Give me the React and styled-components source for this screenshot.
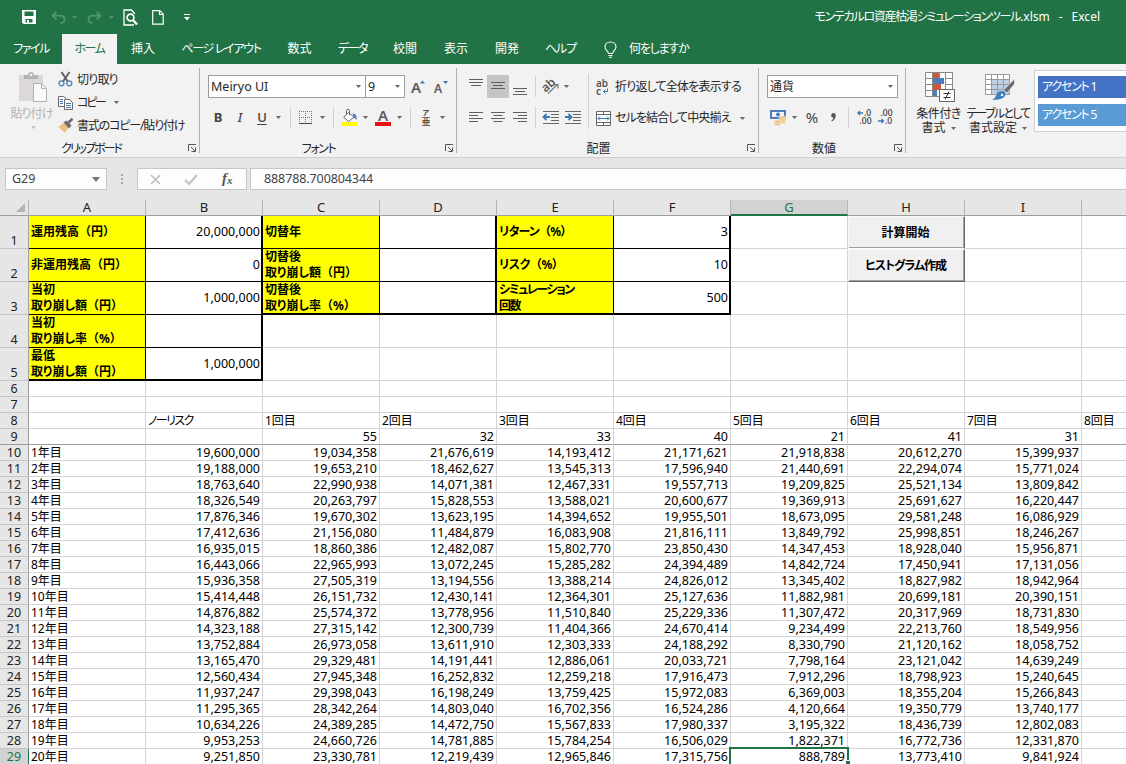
import React from 'react';
import styled, { createGlobalStyle } from 'styled-components';

const GlobalStyle = createGlobalStyle`
  body {
    margin: 0;
    overflow: hidden;
    font-family: "Noto Sans", "Noto Sans CJK JP", sans-serif;
    font-size: 12px;
    line-height: 16px;
    color: #262626;
    font-feature-settings: "palt";
  }
  svg {
    display: block;
    flex: none;
    overflow: visible;
  }
`;

const Window = styled.div`
  width: 1126px;
  height: 764px;
  overflow: hidden;
  display: flex;
  flex-direction: column;
  background-color: #e6e6e6;
`;

const Text = styled.span`
  white-space: pre;
  letter-spacing: ${({ track }) => track || 0}px;
  font-size: ${({ size }) => size || 12}px;
`;

/* title bar */

const TitleBar = styled.header`
  height: 34px;
  flex: none;
  display: flex;
  align-items: center;
  box-sizing: border-box;
  padding: 0 26px 0 11px;
  background-color: #217346;
  color: #ffffff;
`;

const QuickAccess = styled.div`
  display: flex;
  flex: 1;
  align-items: center;
`;

const Title = styled.div`
  display: flex;
  gap: 9px;
  padding-bottom: 1px;
`;

/* tabs */

const TabBar = styled.nav`
  height: 30px;
  flex: none;
  display: flex;
  background-color: #217346;
`;

const Tab = styled.div`
  width: ${({ w }) => w}px;
  display: flex;
  align-items: center;
  justify-content: center;
  box-sizing: border-box;
  background-color: ${({ active }) => (active ? '#f2f2f2' : 'transparent')};
  color: ${({ active }) => (active ? '#217346' : '#ffffff')};
`;

const TellMe = styled.div`
  display: flex;
  align-items: center;
  gap: 12px;
  padding-left: 16px;
  color: #ffffff;
`;

/* ribbon */

const Ribbon = styled.div`
  height: 94px;
  flex: none;
  box-sizing: border-box;
  display: flex;
  background-color: #f2f2f2;
  border-bottom: 1px solid #cfcfcf;
`;

const Group = styled.section`
  width: ${({ w }) => w}px;
  flex: none;
  box-sizing: border-box;
  display: flex;
  flex-direction: column;
  margin: 4px 0 4px;
  border-right: ${({ last }) => (last ? 'none' : '1px solid #b1b1b1')};
`;

const GroupBody = styled.div`
  height: 72px;
  flex: none;
  display: flex;
  padding-left: ${({ pad }) => pad || 0}px;
`;

const GroupFooter = styled.div`
  height: 9px;
  display: flex;
  align-items: center;
  padding: 4px 2px 0 0;
`;

const GroupName = styled.div`
  flex: 1;
  text-align: center;
  margin-left: ${({ shift }) => shift || 0}px;
`;

const Stack = styled.div`
  display: flex;
  flex-direction: column;
  gap: 5px;
  padding-top: 7px;
`;

const ToolRow = styled.div`
  display: flex;
  align-items: center;
  height: ${({ h }) => h}px;
`;

const Tool = styled.div`
  width: ${({ w }) => w}px;
  height: ${({ h }) => h || 23}px;
  flex: none;
  display: flex;
  align-items: center;
  justify-content: center;
  background-color: ${({ active }) => (active ? '#c5c5c5' : 'transparent')};
  color: #444444;
`;

const Letter = styled.span`
  font-size: ${({ size }) => size || 13}px;
  font-weight: ${({ weight }) => weight || 400};
  font-style: ${({ italic }) => (italic ? 'italic' : 'normal')};
  text-decoration: ${({ underline }) => (underline ? 'underline' : 'none')};
  text-underline-offset: 2px;
  color: #444444;
`;

const Divider = styled.div`
  width: 1px;
  height: ${({ h }) => h || 21}px;
  margin: ${({ gap }) => gap || '0'};
  flex: none;
  background-color: #d0d0d0;
`;

const Select = styled.div`
  width: ${({ w }) => w}px;
  height: 23px;
  flex: none;
  box-sizing: border-box;
  display: flex;
  align-items: center;
  justify-content: space-between;
  padding: 0 4px 0 2px;
  margin-left: ${({ joined }) => (joined ? -1 : 0)}px;
  border: 1px solid #9c9c9c;
  background-color: #ffffff;
`;

const Commands = styled.div`
  display: flex;
  flex-direction: column;
`;

const Command = styled.div`
  height: ${({ h }) => h || 23}px;
  display: flex;
  align-items: center;
`;

const CommandIcon = styled.div`
  width: 19px;
  flex: none;
`;

const BigButton = styled.div`
  width: ${({ w }) => w}px;
  display: flex;
  flex-direction: column;
  align-items: center;
  padding-top: 4px;
  line-height: 14px;
  color: ${({ disabled }) => (disabled ? '#b1b1b1' : '#262626')};
`;

const BigLabel = styled.div`
  display: flex;
  flex-direction: column;
  align-items: center;
  margin-top: 5px;
  padding-right: 3px;
  white-space: nowrap;
`;

const BigLabelRow = styled.div`
  display: flex;
  align-items: center;
  gap: 5px;
`;

const Gallery = styled.div`
  width: 100px;
  height: 62px;
  box-sizing: border-box;
  display: flex;
  flex-direction: column;
  gap: 6px;
  margin: 2px 0 0 5px;
  padding: 5px 0 0 3px;
  border: 1px solid #cfcfcf;
  background-color: #ffffff;
`;

const Swatch = styled.div`
  height: 22px;
  display: flex;
  align-items: center;
  padding-left: 4px;
  background-color: ${({ color }) => color};
  color: #ffffff;
`;

/* formula bar */

const FormulaBar = styled.div`
  height: 42px;
  flex: none;
  box-sizing: border-box;
  display: flex;
  padding: 10px 0 10px 5px;
  color: #444444;
`;

const Box = styled.div`
  width: ${({ w }) => w}px;
  height: 22px;
  box-sizing: border-box;
  display: flex;
  flex: none;
  align-items: center;
  justify-content: ${({ justify }) => justify || 'flex-start'};
  margin-right: ${({ gap }) => gap || 0}px;
  padding: 0 ${({ pad }) => pad || 0}px;
  border: 1px solid #c6c6c6;
  background-color: #fdfdfd;
`;

const Grip = styled.div`
  width: 30px;
  flex: none;
  display: flex;
  flex-direction: column;
  align-items: center;
  justify-content: center;
  gap: 2px;
`;

const Dot = styled.i`
  width: 2px;
  height: 2px;
  background-color: #a6a6a6;
`;

/* sheet */

const Sheet = styled.div`
  display: grid;
  grid-template-columns: 29px repeat(10, 117px);
  grid-template-rows: 16px repeat(5, 33px) repeat(24, 16px);
  background-color: #ffffff;
  color: #000000;
`;

const Corner = styled.div`
  box-sizing: border-box;
  display: flex;
  align-items: flex-end;
  justify-content: flex-end;
  padding: 0 3px 3px 0;
  background-color: #e6e6e6;
  border-right: 1px solid #b5b5b5;
  border-bottom: 1px solid #9e9e9e;
`;

const ColumnHeader = styled.div`
  box-sizing: border-box;
  font-size: 13px;
  line-height: 14px;
  text-align: center;
  background-color: ${({ active }) => (active ? '#d2d2d2' : '#e6e6e6')};
  color: ${({ active }) => (active ? '#217346' : '#222222')};
  border-right: 1px solid #b5b5b5;
  border-bottom: ${({ active }) => (active ? '2px solid #217346' : '1px solid #9e9e9e')};
`;

const RowHeader = styled.div`
  box-sizing: border-box;
  display: flex;
  align-items: flex-end;
  justify-content: center;
  font-size: 12.5px;
  line-height: 15px;
  background-color: ${({ active }) => (active ? '#d2d2d2' : '#e6e6e6')};
  color: ${({ active }) => (active ? '#217346' : '#222222')};
  border-right: 1px solid ${({ active }) => (active ? '#217346' : '#9e9e9e')};
  border-bottom: 1px solid ${({ frozen }) => (frozen ? '#9e9e9e' : '#c6c6c6')};
`;

const lines = {
  grid: '1px solid #d4d4d4',
  frozen: '1px solid #9e9e9e',
  thin: '1px solid #000000',
  thick: '2px solid #000000',
};

const Cell = styled.div`
  position: relative;
  box-sizing: border-box;
  display: flex;
  align-items: center;
  justify-content: ${({ number }) => (number ? 'flex-end' : 'flex-start')};
  padding: ${({ number, edge }) => (number ? `0 ${edge === 'thick' ? 1 : 2}px 0 0` : '0 0 0 2px')};
  font-size: ${({ number }) => (number ? 12.5 : 12)}px;
  font-weight: ${({ label }) => (label ? 700 : 400)};
  line-height: 16px;
  white-space: pre;
  letter-spacing: ${({ track }) => track || 0}px;
  background-color: ${({ label }) => (label ? '#ffff00' : '#ffffff')};
  border-right: ${({ edge }) => lines[edge || 'grid']};
  border-bottom: ${({ base }) => lines[base || 'grid']};
`;

const Paren = styled.span`
  margin-left: ${({ open }) => (open ? 5.5 : 0.5)}px;
  margin-right: ${({ open }) => (open ? 0.5 : 0)}px;
`;

const Selection = styled.div`
  position: absolute;
  top: -2px;
  left: -2px;
  right: -2px;
  bottom: -2px;
  z-index: 1;
  border: 2px solid #217346;
`;

const FillHandle = styled.i`
  position: absolute;
  right: -3px;
  bottom: 0;
  width: 4px;
  height: 3px;
  background-color: #217346;
  border-top: 1px solid #ffffff;
  border-left: 1px solid #ffffff;
`;

const SheetButton = styled.button`
  box-sizing: border-box;
  margin: 0;
  padding: 1px 2px 0 0;
  font: inherit;
  font-weight: 700;
  font-feature-settings: inherit;
  letter-spacing: ${({ track }) => track || 0}px;
  color: #000000;
  background-color: #f0f0f0;
  border: 1px solid #f8f8f8;
  border-right-color: #696969;
  border-bottom-color: ${({ stacked }) => (stacked ? '#ffffff' : '#696969')};
  box-shadow: inset -1px -1px 0 #a0a0a0;
`;

/* icons */

const Caret = ({ color = '#666666' }) => (
  <svg width="5" height="3" viewBox="0 0 5 3">
    <path d="M0 0h5L2.5 3z" fill={color} />
  </svg>
);

const SaveIcon = () => (
  <svg width="14" height="14" viewBox="0 0 14 14">
    <path d="M0 0h14v14H1.500L0 12.500z" fill="#fff" />
    <path d="M2.500 1.500h9V6h-9zM3.500 9h7v3.500h-7z" fill="#217346" />
    <path d="M5 10h2v2.500H5z" fill="#fff" />
  </svg>
);

const UndoIcon = ({ flip }) => (
  <svg width="15" height="13" viewBox="0 0 15 13">
    <path
      d="M5.500 1L1.500 4.700 5.500 8.500M2 4.700h7c3 0 4.500 1.800 4.500 3.800S12 12 9.500 12"
      transform={flip ? 'translate(15 0) scale(-1 1)' : undefined}
      fill="none"
      stroke="#4f9570"
      strokeWidth="1.8"
    />
  </svg>
);

const PreviewIcon = () => (
  <svg width="15" height="17" viewBox="0 0 15 17">
    <path d="M11.500 5V4.500L8.500 1H1v15h10" fill="none" stroke="#fff" strokeWidth="1.300" />
    <circle cx="7.500" cy="8.500" r="3.400" fill="none" stroke="#fff" strokeWidth="1.700" />
    <path d="M10 11l4 4.500" stroke="#fff" strokeWidth="2.300" />
  </svg>
);

const NewFileIcon = () => (
  <svg width="12" height="15" viewBox="0 0 12 15">
    <path d="M.7.700h7l3.500 3.500v10H.7zM7.500.700v3.800h3.700" fill="none" stroke="#fff" strokeWidth="1.200" />
  </svg>
);

const CustomizeIcon = () => (
  <svg width="6" height="7" viewBox="0 0 6 7">
    <path d="M0 0h6v1H0zM0 3h6L3 6.500z" fill="#fff" />
  </svg>
);

const BulbIcon = () => (
  <svg width="13" height="17" viewBox="0 0 13 17">
    <path
      d="M4.500 12.500c0-2-3.500-3.500-3.500-6.600C1 3 3.300 1 6.500 1S12 3 12 5.900c0 3.100-3.500 4.600-3.500 6.600zM4.500 14.500h4M5 16.300h3"
      fill="none"
      stroke="#fff"
      strokeWidth="1.100"
    />
  </svg>
);

const PasteIcon = () => (
  <svg width="28" height="30" viewBox="0 0 28 30">
    <path d="M0 3h24v26H0z" fill="#dbd7db" />
    <path d="M5 3h4c0-4 6-4 6 0h4v4H5z" fill="#b4b4b4" />
    <circle cx="12" cy="3" r="1.300" fill="#f2f2f2" />
    <path d="M14.500 11.500h8l5 5v13h-13z" fill="#fafafa" stroke="#b4b0b8" />
    <path d="M22.500 11.500v5h5" fill="none" stroke="#b4b0b8" />
  </svg>
);

const CutIcon = () => (
  <svg width="15" height="15" viewBox="0 0 15 15">
    <path d="M3.500 0L9.800 9.500M11.500 0L5 9.500" stroke="#5f5f5f" strokeWidth="1.900" />
    <circle cx="3.500" cy="11.300" r="2.500" fill="none" stroke="#4a7ebb" strokeWidth="1.300" />
    <circle cx="11.300" cy="11.300" r="2.500" fill="none" stroke="#4a7ebb" strokeWidth="1.300" />
  </svg>
);

const CopyIcon = () => (
  <svg width="15" height="14" viewBox="0 0 15 14">
    <path d="M.5.500h5l2.500 2v8H.5z" fill="#fff" stroke="#6a6a6a" />
    <path d="M2 3.500h3M2 5.500h3M2 7.500h3" stroke="#4a7ebb" />
    <path d="M6.500 3.500h5l3 3v7h-8z" fill="#fff" stroke="#6a6a6a" />
    <path d="M8 7.500h5M8 9.500h5M8 11.500h5" stroke="#4a7ebb" />
  </svg>
);

const PainterIcon = () => (
  <svg width="16" height="15" viewBox="0 0 16 15">
    <path d="M.5 8.500L6 5l4.500 4.500L7 14.500C4.500 13 2 11.500.5 8.500z" fill="#eebf7c" />
    <path d="M5.500 4.500L8.500 2.500l5 5-2.500 3z" fill="#6a6a6a" />
    <path d="M10.500 4.500L14.500.800" stroke="#6a6a6a" strokeWidth="2.600" />
  </svg>
);

const LauncherIcon = () => (
  <svg width="9" height="9" viewBox="0 0 9 9">
    <path d="M.5 7V.500H8" fill="none" stroke="#555" />
    <path d="M3 3l4 4M7.500 3.500v4h-4" fill="none" stroke="#555" />
  </svg>
);

const ResizeFont = ({ size, up }) => (
  <svg width="16" height="18" viewBox="0 0 16 18">
    <text x="0" y="15" fontFamily="Noto Sans" fontSize={size} fontWeight="600" fill="#5a5a5a">A</text>
    <path d={up ? 'M9 5.500h5L11.500 2.500z' : 'M9 3h5L11.500 6z'} fill="#3b78b8" />
  </svg>
);

const BorderIcon = () => (
  <svg width="13" height="13" viewBox="0 0 13 13">
    <path d="M0 .5h13M0 6.500h13M.5 0v13M6.500 0v13M12.500 0v13" stroke="#777" strokeDasharray="1 1" />
    <path d="M0 12.500h13" stroke="#444" />
  </svg>
);

const FillIcon = () => (
  <svg width="17" height="17" viewBox="0 0 17 17">
    <path d="M7.500 3.500L13 8.200l-5.500 4.300-4.800-4.300z" fill="#fff" stroke="#666" />
    <path d="M5.500 6V1.500c0-1.500 3-1.500 3 0V6" fill="none" stroke="#666" />
    <path d="M11.500 4.500c3 0 4.500 2 4 6.500l-2.500-2.500z" fill="#4a7ebb" />
    <path d="M0 13h16v4H0z" fill="#ffff00" />
  </svg>
);

const FontColorIcon = () => (
  <svg width="17" height="17" viewBox="0 0 17 17">
    <text x="3" y="12" fontFamily="Noto Sans" fontSize="15" fontWeight="600" fill="#5a5a5a">A</text>
    <path d="M0 13h16v4H0z" fill="#e81010" />
  </svg>
);

const PhoneticIcon = () => (
  <svg width="10" height="18" viewBox="0 0 10 18">
    <text x="1.500" y="7" fontFamily="Noto Sans CJK JP" fontSize="7" fontWeight="600" fill="#444">ア</text>
    <text x="0.500" y="16.500" fontFamily="Noto Sans CJK JP" fontSize="9" fontWeight="500" fill="#444">亜</text>
  </svg>
);

const alignPaths = {
  top: 'M0 1.500h14M0 4.500h14M2 7.500h10',
  middle: 'M0 4.500h14M2 7.500h10M0 10.500h14',
  bottom: 'M0 10.500h14M2 13.500h10M0 16.500h14',
  left: 'M0 3.500h14M0 6.500h9M0 9.500h14M0 12.500h9',
  center: 'M0 3.500h14M2.500 6.500h9M0 9.500h14M2.500 12.500h9',
  right: 'M0 3.500h14M5 6.500h9M0 9.500h14M5 12.500h9',
};

const AlignIcon = ({ kind }) => (
  <svg width="14" height="17" viewBox="0 0 14 17">
    <path d={alignPaths[kind]} stroke="#5f5f5f" />
  </svg>
);

const OrientationIcon = () => (
  <svg width="18" height="17" viewBox="0 0 18 17">
    <text x="1" y="12" fontFamily="Noto Sans" fontSize="12" fontWeight="600" fill="#555" transform="rotate(-42 6 10)">ab</text>
    <path d="M6 15.500l9.500-9M12 6.500h4v4" fill="none" stroke="#777" strokeWidth="1.200" />
  </svg>
);

const IndentIcon = ({ out }) => (
  <svg width="16" height="14" viewBox="0 0 16 14">
    <path d="M0 1.500h16M8 4.500h8M8 7.500h8M8 10.500h8M0 13.500h16" stroke="#666" />
    <path d={out ? 'M3.500 4L.5 7l3 3M1 7h6' : 'M3.500 4l3 3-3 3M0 7h6'} fill="none" stroke="#3b78b8" strokeWidth="1.800" />
  </svg>
);

const WrapIcon = () => (
  <svg width="14" height="17" viewBox="0 0 14 17">
    <text x="0" y="8" fontFamily="Noto Sans" fontSize="10" fontWeight="600" fill="#555">ab</text>
    <text x="0" y="15.500" fontFamily="Noto Sans" fontSize="10" fontWeight="600" fill="#555">c</text>
    <path d="M11.500 9.500v3H7.500M9.500 10.500l-2 2 2 2" fill="none" stroke="#3b78b8" />
  </svg>
);

const MergeIcon = () => (
  <svg width="15" height="15" viewBox="0 0 15 15">
    <path d="M.5.500h14v14H.5zM.5 3.500h14M.5 11.500h14M7.500.500v3M7.500 11.500v3" fill="#fff" stroke="#666" />
    <path d="M2 7.500h11M4 5.500l-2 2 2 2M11 5.500l2 2-2 2" fill="none" stroke="#3b78b8" />
  </svg>
);

const MoneyIcon = () => (
  <svg width="17" height="17" viewBox="0 0 17 17">
    <path d="M0 1h16v9H0z" fill="#4a7ebb" />
    <path d="M2 3h12v5H2z" fill="#f2f2f2" />
    <circle cx="8" cy="5.500" r="2" fill="#4a7ebb" />
    <g fill="#eebf7c" stroke="#f2f2f2" strokeWidth=".6">
      <ellipse cx="12.500" cy="13" rx="3.500" ry="1.600" />
      <ellipse cx="12.500" cy="10.700" rx="3.500" ry="1.600" />
      <ellipse cx="12.500" cy="8.400" rx="3.500" ry="1.600" />
      <ellipse cx="7.500" cy="15" rx="3.500" ry="1.600" />
      <ellipse cx="7.500" cy="12.700" rx="3.500" ry="1.600" />
    </g>
  </svg>
);

const CommaIcon = () => (
  <svg width="5" height="9" viewBox="0 0 5 9">
    <path d="M2.300 0C4 0 5 1.200 4.700 3.200 4.400 5.500 3 7.300.8 8.400L.4 7.600C1.700 6.800 2.300 5.800 2.500 4.600 1 4.700.2 3.700.2 2.400.2 1 1.100 0 2.300 0z" fill="#555" />
  </svg>
);

const DecimalIcon = ({ more }) => (
  <svg width="15" height="16" viewBox="0 0 15 16">
    <g fontFamily="Noto Sans" fontSize="8.500" fontWeight="500" fill="#333">
      <text x={more ? 7 : 2.5} y="7">{more ? '.0' : '.00'}</text>
      <text x={more ? 2.5 : 7} y="15">{more ? '.00' : '.0'}</text>
    </g>
    <path d={more ? 'M6 4H1M3 2L1 4l2 2' : 'M0 12h5.500M3.500 10l2 2-2 2'} fill="none" stroke="#3b78b8" strokeWidth="1.300" />
  </svg>
);

const ConditionalIcon = () => (
  <svg width="30" height="30" viewBox="0 0 30 30">
    <path d="M.5.500h27v24H.5z" fill="#fff" />
    <path d="M8 0h6v6H8zM8 12h8v6H8z" fill="#d2553a" />
    <path d="M8 6h11v6H8zM8 18h4v6H8z" fill="#4a7ebb" />
    <path d="M.5.500h27v24H.5zM.5 6.500h7M20.500 6.500h7M.5 12.500h7M20.500 12.500h7M.5 18.500h7M7.500.500v24M14.500.500v6M20.500.500v24" fill="none" stroke="#8a8a8a" />
    <path d="M14.500 17.500h15v12h-15z" fill="#fff" stroke="#666" />
    <path d="M18.500 21.500h7M18.500 25.500h7M24 19.500l-4 8" stroke="#333" />
  </svg>
);

const TableIcon = () => (
  <svg width="30" height="30" viewBox="0 0 30 30">
    <path d="M.5 2.500h24v20H.5z" fill="#fff" />
    <path d="M6.500 7.500h18v15h-18z" fill="#bcd0e8" />
    <path d="M.5 2.500h24v20H.5zM.5 7.500h24M.5 12.500h24M.5 17.500h24M6.500 2.500v20M12.500 2.500v20M18.500 2.500v20" fill="none" stroke="#999" />
    <path d="M29.500 7v5L22 21l-3.500-3z" fill="#6a6a6a" stroke="#f2f2f2" strokeWidth=".7" />
    <path d="M20 20c2 5-3 8-13 8 5-2 4-9 9-9z" fill="#3f7fbf" />
    <circle cx="17" cy="23" r="1.200" fill="#fff" />
  </svg>
);

const CornerIcon = () => (
  <svg width="9" height="9" viewBox="0 0 9 9">
    <path d="M9 0v9H0z" fill="#b5b5b5" />
  </svg>
);

/* data */

const tabs = [
  { label: 'ファイル', w: 62, track: -1.5 },
  { label: 'ホーム', w: 55, track: -1.4, active: true },
  { label: '挿入', w: 52 },
  { label: 'ページ レイアウト', w: 104, track: -1.3 },
  { label: '数式', w: 53 },
  { label: 'データ', w: 53, track: -1.4 },
  { label: '校閲', w: 52 },
  { label: '表示', w: 50 },
  { label: '開発', w: 52 },
  { label: 'ヘルプ', w: 55, track: -1 },
];

const columns = ['A', 'B', 'C', 'D', 'E', 'F', 'G', 'H', 'I', ''];

const label = (value, base = 'thin', edge = 'thin', track = 0) => ({ value, base, edge, track, label: true });
const value = (text, base = 'thin', edge = 'thick') => ({ value: text, base, edge, number: true });
const blank = { value: '' };

const settings = [
  [
    label('運用残高（円）'), value('20,000,000'), label('切替年'), value(''),
    label('リターン（%）', 'thin', 'thin', -0.8), value('3'), blank, { button: '計算開始', stacked: true }, blank, blank,
  ],
  [
    label('非運用残高（円）'), value('0'), label('切替後\n取り崩し額（円）'), value(''),
    label('リスク（%）', 'thin', 'thin', -0.5), value('10'), blank, { button: 'ヒストグラム作成', track: -1 }, blank, blank,
  ],
  [
    label('当初\n取り崩し額（円）'), value('1,000,000'), label('切替後\n取り崩し率（%）', 'thick'), value('', 'thick'),
    label('シミュレーション\n回数', 'thick', 'thin', -1.4), value('500', 'thick'), blank, blank, blank, blank,
  ],
  [label('当初\n取り崩し率（%）'), value(''), blank, blank, blank, blank, blank, blank, blank, blank],
  [label('最低\n取り崩し額（円）', 'thick'), value('1,000,000', 'thick'), blank, blank, blank, blank, blank, blank, blank, blank],
];

const trials = ['', 'ノーリスク', '1回目', '2回目', '3回目', '4回目', '5回目', '6回目', '7回目', '8回目'];
const counts = ['', '', '55', '32', '33', '40', '21', '41', '31', ''];

const balances = [
  '19,600,000 19,034,358 21,676,619 14,193,412 21,171,621 21,918,838 20,612,270 15,399,937',
  '19,188,000 19,653,210 18,462,627 13,545,313 17,596,940 21,440,691 22,294,074 15,771,024',
  '18,763,640 22,990,938 14,071,381 12,467,331 19,557,713 19,209,825 25,521,134 13,809,842',
  '18,326,549 20,263,797 15,828,553 13,588,021 20,600,677 19,369,913 25,691,627 16,220,447',
  '17,876,346 19,670,302 13,623,195 14,394,652 19,955,501 18,673,095 29,581,248 16,086,929',
  '17,412,636 21,156,080 11,484,879 16,083,908 21,816,111 13,849,792 25,998,851 18,246,267',
  '16,935,015 18,860,386 12,482,087 15,802,770 23,850,430 14,347,453 18,928,040 15,956,871',
  '16,443,066 22,965,993 13,072,245 15,285,282 24,394,489 14,842,724 17,450,941 17,131,056',
  '15,936,358 27,505,319 13,194,556 13,388,214 24,826,012 13,345,402 18,827,982 18,942,964',
  '15,414,448 26,151,732 12,430,141 12,364,301 25,127,636 11,882,981 20,699,181 20,390,151',
  '14,876,882 25,574,372 13,778,956 11,510,840 25,229,336 11,307,472 20,317,969 18,731,830',
  '14,323,188 27,315,142 12,300,739 11,404,366 24,670,414 9,234,499 22,213,760 18,549,956',
  '13,752,884 26,973,058 13,611,910 12,303,333 24,188,292 8,330,790 21,120,162 18,058,752',
  '13,165,470 29,329,481 14,191,441 12,886,061 20,033,721 7,798,164 23,121,042 14,639,249',
  '12,560,434 27,945,348 16,252,832 12,259,218 17,916,473 7,912,296 18,798,923 15,240,645',
  '11,937,247 29,398,043 16,198,249 13,759,425 15,972,083 6,369,003 18,355,204 15,266,843',
  '11,295,365 28,342,264 14,803,040 16,702,356 16,524,286 4,120,664 19,350,779 13,740,177',
  '10,634,226 24,389,285 14,472,750 15,567,833 17,980,337 3,195,322 18,436,739 12,802,083',
  '9,953,253 24,660,726 14,781,885 15,784,254 16,506,029 1,822,371 16,772,736 12,331,870',
  '9,251,850 23,330,781 12,219,439 12,965,846 17,315,756 888,789 13,773,410 9,841,924',
];

const rows = [
  ...settings,
  columns.map(() => blank),
  columns.map(() => blank),
  trials.map((text) => ({ value: text, track: text === 'ノーリスク' ? -1.6 : 0 })),
  counts.map((text) => ({ value: text, number: true, base: 'frozen' })),
  ...balances.map((line, i) => [
    { value: `${i + 1}年目` },
    ...line.split(' ').map((text, c) => ({ value: text, number: true, selected: i === 19 && c === 5 })),
    blank,
  ]),
];

const LabelText = ({ children }) => (
  <span>
    {children.split(/([（）])/).map((part, i) => (
      part === '（' || part === '）' ? <Paren key={i} open={part === '（'}>{part}</Paren> : part
    ))}
  </span>
);

const Footer = ({ name, track, shift }) => (
  <GroupFooter>
    <GroupName shift={shift}><Text track={track}>{name}</Text></GroupName>
    <LauncherIcon />
  </GroupFooter>
);

const ClipboardGroup = () => (
  <Group w={200}>
    <GroupBody pad={8}>
      <BigButton w={50} disabled>
        <PasteIcon />
        <BigLabel><Text track={-0.9}>貼り付け</Text></BigLabel>
        <Tool w={10} h={12}><Caret color="#c0c0c0" /></Tool>
      </BigButton>
      <Commands>
        <Command>
          <CommandIcon><CutIcon /></CommandIcon>
          <Text track={-0.8}>切り取り</Text>
        </Command>
        <Command>
          <CommandIcon><CopyIcon /></CommandIcon>
          <Text track={-2.2}>コピー</Text>
          <Tool w={24}><Caret /></Tool>
        </Command>
        <Command>
          <CommandIcon><PainterIcon /></CommandIcon>
          <Text track={-1.15}>書式のコピー/貼り付け</Text>
        </Command>
      </Commands>
    </GroupBody>
    <Footer name="クリップボード" track={-2} shift={-6} />
  </Group>
);

const FontGroup = () => (
  <Group w={257}>
    <GroupBody pad={8}>
      <Stack>
        <ToolRow h={23}>
          <Select w={158}><Text size={12.5}>Meiryo UI</Text><Caret /></Select>
          <Select w={40} joined><Text size={12.5}>9</Text><Caret /></Select>
          <Tool w={28}><ResizeFont size={15} up /></Tool>
          <Tool w={18}><ResizeFont size={12} /></Tool>
        </ToolRow>
        <ToolRow h={28}>
          <Tool w={20}><Letter weight={700}>B</Letter></Tool>
          <Tool w={24}><Letter italic weight={500}>I</Letter></Tool>
          <Tool w={20}><Letter underline weight={500}>U</Letter></Tool>
          <Tool w={13}><Caret /></Tool>
          <Divider gap="0 4px 0 5px" />
          <Tool w={21}><BorderIcon /></Tool>
          <Tool w={12}><Caret /></Tool>
          <Divider gap="0 5px" />
          <Tool w={21}><FillIcon /></Tool>
          <Tool w={11}><Caret /></Tool>
          <Tool w={25}><FontColorIcon /></Tool>
          <Tool w={7}><Caret /></Tool>
          <Divider gap="0 6px 0 7px" />
          <Tool w={17}><PhoneticIcon /></Tool>
          <Tool w={16}><Caret /></Tool>
        </ToolRow>
      </Stack>
    </GroupBody>
    <Footer name="フォント" track={-1.4} shift={-8} />
  </Group>
);

const AlignmentGroup = () => (
  <Group w={302}>
    <GroupBody pad={8}>
      <Stack>
        <ToolRow h={23}>
          <Tool w={22}><AlignIcon kind="top" /></Tool>
          <Tool w={22} active><AlignIcon kind="middle" /></Tool>
          <Tool w={22}><AlignIcon kind="bottom" /></Tool>
          <Divider gap="0 4px" />
          <Tool w={22}><OrientationIcon /></Tool>
          <Tool w={8}><Caret /></Tool>
        </ToolRow>
        <ToolRow h={28}>
          <Tool w={22}><AlignIcon kind="left" /></Tool>
          <Tool w={22}><AlignIcon kind="center" /></Tool>
          <Tool w={22}><AlignIcon kind="right" /></Tool>
          <Divider gap="0 4px" />
          <Tool w={22}><IndentIcon out /></Tool>
          <Tool w={22}><IndentIcon /></Tool>
        </ToolRow>
      </Stack>
      <Divider h={55} gap="6px 7px 0 4px" />
      <Stack>
        <Command h={24}>
          <CommandIcon><WrapIcon /></CommandIcon>
          <Text track={-0.8}>折り返して全体を表示する</Text>
        </Command>
        <Command h={28}>
          <CommandIcon><MergeIcon /></CommandIcon>
          <Text track={-0.9}>セルを結合して中央揃え</Text>
          <Tool w={24}><Caret /></Tool>
        </Command>
      </Stack>
    </GroupBody>
    <Footer name="配置" shift={-7} />
  </Group>
);

const NumberGroup = () => (
  <Group w={147}>
    <GroupBody pad={8}>
      <Stack>
        <ToolRow h={23}>
          <Select w={131}><Text>通貨</Text><Caret /></Select>
        </ToolRow>
        <ToolRow h={28}>
          <Tool w={22}><MoneyIcon /></Tool>
          <Tool w={11}><Caret /></Tool>
          <Tool w={24}><Letter size={15}>%</Letter></Tool>
          <Tool w={18}><CommaIcon /></Tool>
          <Divider gap="0 7px 0 6px" />
          <Tool w={17}><DecimalIcon more /></Tool>
          <Tool w={25}><DecimalIcon /></Tool>
        </ToolRow>
      </Stack>
    </GroupBody>
    <Footer name="数値" shift={-5} />
  </Group>
);

const StylesGroup = () => (
  <Group w={240} last>
    <GroupBody pad={4}>
      <BigButton w={60}>
        <ConditionalIcon />
        <BigLabel>
          <Text track={-0.5}>条件付き</Text>
          <BigLabelRow><Text>書式</Text><Caret /></BigLabelRow>
        </BigLabel>
      </BigButton>
      <BigButton w={59}>
        <TableIcon />
        <BigLabel>
          <Text track={-1.7}>テーブルとして</Text>
          <BigLabelRow><Text>書式設定</Text><Caret /></BigLabelRow>
        </BigLabel>
      </BigButton>
      <Gallery>
        <Swatch color="#4472c4"><Text track={-1.2}>アクセント 1</Text></Swatch>
        <Swatch color="#5b9bd5"><Text track={-1.2}>アクセント 5</Text></Swatch>
      </Gallery>
    </GroupBody>
  </Group>
);

const App = () => (
  <>
    <GlobalStyle />
    <Window>
      <TitleBar>
        <QuickAccess>
          <Tool w={36}><SaveIcon /></Tool>
          <Tool w={22}><UndoIcon /></Tool>
          <Tool w={10}><Caret color="#4f9570" /></Tool>
          <Tool w={30}><UndoIcon flip /></Tool>
          <Tool w={4}><Caret color="#4f9570" /></Tool>
          <Tool w={34}><PreviewIcon /></Tool>
          <Tool w={22}><NewFileIcon /></Tool>
          <Tool w={36}><CustomizeIcon /></Tool>
        </QuickAccess>
        <Title>
          <span>
            <Text track={-1.3}>モンテカルロ資産枯渇シミュレーションツール</Text>
            <Text>.xlsm</Text>
          </span>
          <Text>-</Text>
          <Text>Excel</Text>
        </Title>
      </TitleBar>

      <TabBar>
        {tabs.map((tab) => (
          <Tab key={tab.label} w={tab.w} active={tab.active}>
            <Text track={tab.track}>{tab.label}</Text>
          </Tab>
        ))}
        <TellMe>
          <BulbIcon />
          <Text track={-1.2}>何をしますか</Text>
        </TellMe>
      </TabBar>

      <Ribbon>
        <ClipboardGroup />
        <FontGroup />
        <AlignmentGroup />
        <NumberGroup />
        <StylesGroup />
      </Ribbon>

      <FormulaBar>
        <Box w={102} pad={6} justify="space-between">
          <Text size={12.5}>G29</Text>
          <svg width="8" height="5" viewBox="0 0 8 5"><path d="M0 0h8L4 5z" fill="#777" /></svg>
        </Box>
        <Grip><Dot /><Dot /><Dot /></Grip>
        <Box w={110} pad={12} gap={3} justify="space-between">
          <svg width="11" height="11" viewBox="0 0 11 11">
            <path d="M1 1l9 9M10 1l-9 9" stroke="#bdbdbd" strokeWidth="1.600" />
          </svg>
          <svg width="14" height="11" viewBox="0 0 14 11">
            <path d="M1 6l4 4L13 1" fill="none" stroke="#c4c4c4" strokeWidth="2.200" />
          </svg>
          <svg width="14" height="15" viewBox="0 0 14 15">
            <text x="2" y="11" fontFamily="Liberation Serif" fontStyle="italic" fontWeight="700" fontSize="15" fill="#555">f</text>
            <text x="7" y="12" fontFamily="Liberation Serif" fontStyle="italic" fontWeight="700" fontSize="11" fill="#555">x</text>
          </svg>
        </Box>
        <Box w={880} pad={13}><Text size={12.5} track={-0.1}>888788.700804344</Text></Box>
      </FormulaBar>

      <Sheet>
        <Corner><CornerIcon /></Corner>
        {columns.map((name, i) => <ColumnHeader key={i} active={name === 'G'}>{name}</ColumnHeader>)}
        {rows.map((cells, r) => (
          <React.Fragment key={r}>
            <RowHeader active={r === 28} frozen={r === 8}>{r + 1}</RowHeader>
            {cells.map((cell, c) => (cell.button
              ? <SheetButton key={c} track={cell.track} stacked={cell.stacked}>{cell.button}</SheetButton>
              : (
                <Cell key={c} number={cell.number} label={cell.label} edge={cell.edge} base={cell.base} track={cell.track}>
                  {cell.label ? <LabelText>{cell.value}</LabelText> : cell.value}
                  {cell.selected && <Selection><FillHandle /></Selection>}
                </Cell>
              )
            ))}
          </React.Fragment>
        ))}
      </Sheet>
    </Window>
  </>
);

export default App;
